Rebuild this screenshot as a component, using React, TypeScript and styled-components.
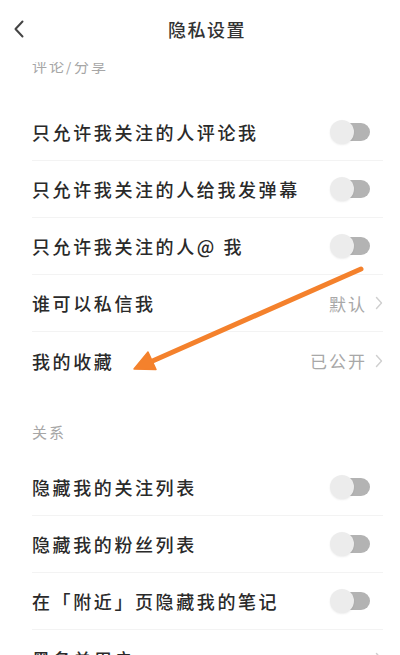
import React from "react";
import styled, { createGlobalStyle } from "styled-components";

const Global = createGlobalStyle`
  html, body { margin: 0; padding: 0; background: #fff; }
  body { font-family: "Noto Sans CJK SC", "Noto Sans", sans-serif; }
`;

const Page = styled.div`
  position: relative;
  width: 400px;
  height: 655px;
  overflow: hidden;
  background: #fff;
  display: flex;
  flex-direction: column;
`;

const Header = styled.div`
  position: relative;
  z-index: 2;
  height: 62px;
  flex: 0 0 62px;
  background: #fff;
  display: grid;
  grid-template-columns: 60px 1fr 60px;
  align-items: center;
`;

const BackBtn = styled.div`
  padding-left: 13px;
  display: flex;
  align-items: center;
  height: 100%;
  padding-bottom: 4px;
  box-sizing: border-box;
`;

const Title = styled.div`
  text-align: center;
  font-size: 18px;
  letter-spacing: 1.5px;
  color: #333;
  font-weight: 500;
  padding-bottom: 4px;
  padding-left: 14px;
`;

const Content = styled.div`
  position: relative;
  z-index: 1;
  flex: 1;
  overflow: hidden;
  display: flex;
  flex-direction: column;
`;

const SectionLabel = styled.div<{ $pb: number; $mt?: number }>`
  height: 70px;
  flex: 0 0 70px;
  margin-top: ${(p) => p.$mt ?? 0}px;
  display: flex;
  align-items: flex-end;
  padding: 0 32px ${(p) => p.$pb}px;
  box-sizing: border-box;
  font-size: 15px;
  line-height: 16px;
  letter-spacing: 2px;
  color: #a6a6a6;
`;

const Row = styled.div<{ $last?: boolean }>`
  height: 57px;
  flex: 0 0 57px;
  margin: 0 17px 0 32px;
  display: flex;
  align-items: center;
  justify-content: space-between;
  box-sizing: border-box;
  border-bottom: ${(p) => (p.$last ? "none" : "1px solid #f3f3f3")};
`;

const Label = styled.span`
  font-size: 18px;
  letter-spacing: 2.6px;
  color: #2a2a2a;
  font-weight: 500;
  white-space: nowrap;
`;

const Toggle = styled.div`
  position: relative;
  width: 40px;
  height: 24px;
  margin-right: 13px;
`;

const Track = styled.div`
  position: absolute;
  right: 0;
  top: 3px;
  width: 34px;
  height: 18px;
  border-radius: 9px;
  background: #b3b3b3;
`;

const Knob = styled.div`
  position: absolute;
  left: 0;
  top: 0;
  width: 24px;
  height: 24px;
  border-radius: 50%;
  background: #ececec;
  box-shadow: 0 1px 2px rgba(0, 0, 0, 0.08);
`;

const Value = styled.div`
  display: flex;
  align-items: center;
  gap: 8px;
  font-size: 17px;
  letter-spacing: 2px;
  color: #a8a8a8;
`;

const Arrow = styled.svg`
  position: absolute;
  left: 0;
  top: 0;
  z-index: 3;
  pointer-events: none;
`;

const Chevron = () => (
  <svg width="8" height="14" viewBox="0 0 8 14">
    <path d="M1.5 1.5 L6.5 7 L1.5 12.5" fill="none" stroke="#cfcfcf" strokeWidth="1.4" strokeLinecap="round" strokeLinejoin="round" />
  </svg>
);

const Switch = () => (
  <Toggle>
    <Track />
    <Knob />
  </Toggle>
);

type Item = { text: string; kind: "toggle" | "link"; value?: string };

const group1: Item[] = [
  { text: "只允许我关注的人评论我", kind: "toggle" },
  { text: "只允许我关注的人给我发弹幕", kind: "toggle" },
  { text: "只允许我关注的人@ 我", kind: "toggle" },
  { text: "谁可以私信我", kind: "link", value: "默认" },
  { text: "我的收藏", kind: "link", value: "已公开" },
];

const group2: Item[] = [
  { text: "隐藏我的关注列表", kind: "toggle" },
  { text: "隐藏我的粉丝列表", kind: "toggle" },
  { text: "在「附近」页隐藏我的笔记", kind: "toggle" },
  { text: "黑名单用户", kind: "link", value: "" },
];

const renderRow = (it: Item, i: number, arr: Item[]) => (
  <Row key={it.text} $last={i === arr.length - 1}>
    <Label>{it.text}</Label>
    {it.kind === "toggle" ? (
      <Switch />
    ) : (
      <Value>
        {it.value ? <span>{it.value}</span> : null}
        <Chevron />
      </Value>
    )}
  </Row>
);

export default function App() {
  return (
    <>
      <Global />
      <Page>
        <Header>
          <BackBtn>
            <svg width="12" height="18" viewBox="0 0 12 18">
              <path d="M9.5 1.5 L2.5 9 L9.5 16.5" fill="none" stroke="#444" strokeWidth="2" strokeLinecap="round" strokeLinejoin="round" />
            </svg>
          </BackBtn>
          <Title>隐私设置</Title>
          <div />
        </Header>
        <Content>
          <SectionLabel $pb={30} $mt={-28}>评论/分享</SectionLabel>
          {group1.map(renderRow)}
          <SectionLabel $pb={19}>关系</SectionLabel>
          {group2.map(renderRow)}
        </Content>
        <Arrow width="400" height="655" viewBox="0 0 400 655">
          <line x1="361" y1="269" x2="148" y2="363" stroke="#f4812c" strokeWidth="5" strokeLinecap="round" />
          <polygon points="134,369 156,369.5 148,352" fill="#f4812c" stroke="#f4812c" strokeWidth="1.5" strokeLinejoin="round" />
        </Arrow>
      </Page>
    </>
  );
}
